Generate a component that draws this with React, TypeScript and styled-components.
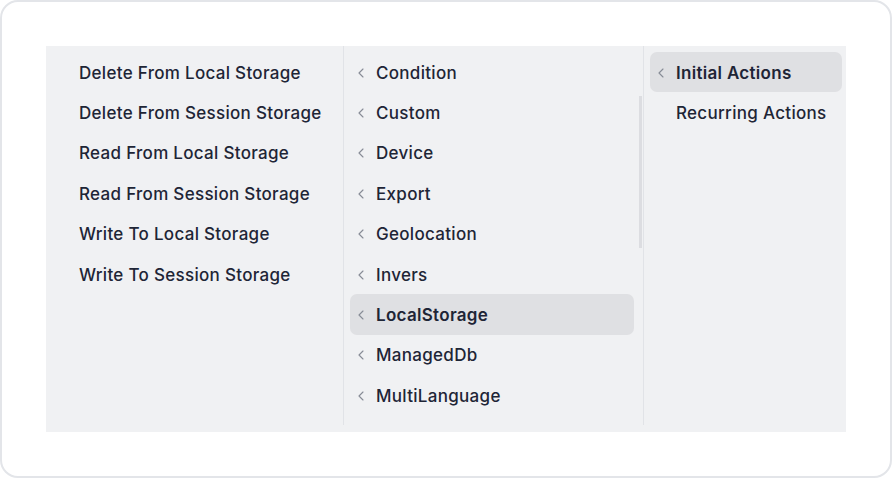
import React from "react";
import styled, { createGlobalStyle } from "styled-components";
import { ChevronLeft } from "lucide-react";

const GlobalStyle = createGlobalStyle`
  * { box-sizing: border-box; }
  html, body { margin: 0; padding: 0; background: #ffffff; }
  body { font-family: Inter, "Noto Sans", sans-serif; }
`;

interface Item {
  label: string;
  chevron?: boolean;
  active?: boolean;
}

const storageActions: Item[] = [
  { label: "Delete From Local Storage" },
  { label: "Delete From Session Storage" },
  { label: "Read From Local Storage" },
  { label: "Read From Session Storage" },
  { label: "Write To Local Storage" },
  { label: "Write To Session Storage" },
];

const categories: Item[] = [
  { label: "Condition", chevron: true },
  { label: "Custom", chevron: true },
  { label: "Device", chevron: true },
  { label: "Export", chevron: true },
  { label: "Geolocation", chevron: true },
  { label: "Invers", chevron: true },
  { label: "LocalStorage", chevron: true, active: true },
  { label: "ManagedDb", chevron: true },
  { label: "MultiLanguage", chevron: true },
];

const triggers: Item[] = [
  { label: "Initial Actions", chevron: true, active: true },
  { label: "Recurring Actions" },
];

function MenuColumn({
  items,
  width,
  padLeft,
  padRight,
  scroll,
}: {
  items: Item[];
  width: number;
  padLeft: number;
  padRight: number;
  scroll?: boolean;
}) {
  return (
    <Column $width={width} $padLeft={padLeft} $padRight={padRight}>
      {items.map((item) => (
        <Row key={item.label} $active={item.active}>
          <ChevronSlot>{item.chevron && <ChevronLeft size={16} strokeWidth={1.7} />}</ChevronSlot>
          <Label>{item.label}</Label>
        </Row>
      ))}
      {scroll && <ScrollThumb />}
    </Column>
  );
}

export default function App() {
  return (
    <>
      <GlobalStyle />
      <Card>
        <Panel>
          <MenuColumn items={storageActions} width={298} padLeft={7} padRight={5} />
          <MenuColumn items={categories} width={300} padLeft={6} padRight={9} scroll />
          <MenuColumn items={triggers} width={202} padLeft={6} padRight={4} />
        </Panel>
      </Card>
    </>
  );
}

const Card = styled.div`
  width: 892px;
  height: 478px;
  border: 2px solid #e3e5e9;
  border-radius: 18px;
  padding: 44px;
  background: #ffffff;
`;

const Panel = styled.div`
  display: flex;
  height: 386px;
  padding-bottom: 7px;
  background: #f0f1f3;
`;

const Column = styled.div<{ $width: number; $padLeft: number; $padRight: number }>`
  position: relative;
  width: ${(p) => p.$width}px;
  display: flex;
  flex-direction: column;
  padding: 6px ${(p) => p.$padRight}px 0 ${(p) => p.$padLeft}px;
  border-right: 1px solid #e1e3e7;

  &:last-child {
    border-right: none;
  }
`;

const Row = styled.div<{ $active?: boolean }>`
  display: flex;
  align-items: center;
  height: 40.4px;
  flex-shrink: 0;
  padding: 1px 0 0 3px;
  border-radius: 7px;
  background: ${(p) => (p.$active ? "#dfe0e3" : "transparent")};
  color: #1e2536;
  font-weight: ${(p) => (p.$active ? 600 : 500)};
`;

const ChevronSlot = styled.span`
  display: flex;
  align-items: center;
  width: 16px;
  height: 16px;
  margin-right: 7px;
  color: #878c96;
`;

const Label = styled.span`
  font-size: 17px;
  line-height: 20px;
  letter-spacing: 0.3px;
  white-space: nowrap;
`;

const ScrollThumb = styled.div`
  position: absolute;
  right: 1px;
  top: 50px;
  width: 3px;
  height: 152px;
  background: #dcdde1;
`;
